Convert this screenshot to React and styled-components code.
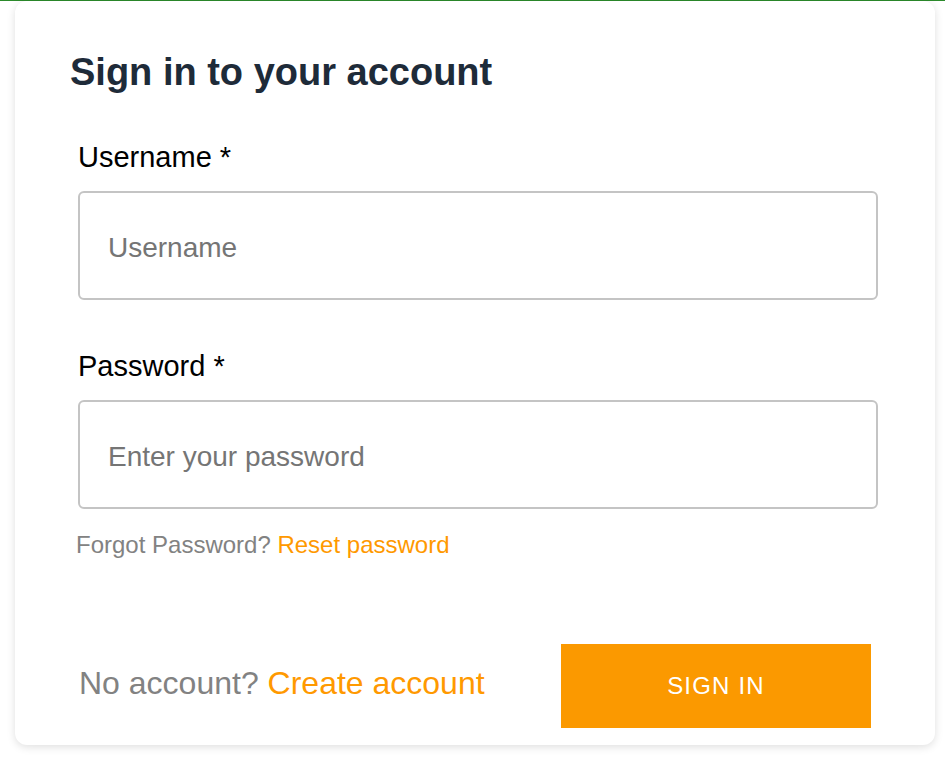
import React from 'react';
import styled, { createGlobalStyle } from 'styled-components';

const GlobalStyles = createGlobalStyle`
	html, body {
		margin: 0;
		padding: 0;
		background: #fff;
		font-family: "Liberation Sans", Arial, sans-serif;
	}
	* { box-sizing: border-box; }
`;

const TopLine = styled.div`
	height: 1px;
	background-color: #2b8a2b;
`;

const Page = styled.div`
	padding: 0 10px 14px 15px;
`;

const Card = styled.div`
	width: 920px;
	height: 744px;
	background: #fff;
	border-radius: 12px;
	box-shadow: 0 2px 8px rgba(0, 0, 0, 0.13);
	padding: 50px 56px 18px 55px;
	display: flex;
	flex-direction: column;
`;

const Title = styled.h1`
	margin: 0;
	font-size: 38px;
	font-weight: 700;
	color: #1e2b39;
	line-height: normal;
`;

const Body = styled.div`
	margin-top: 47px;
	padding-left: 8px;
	display: flex;
	flex-direction: column;
`;

const Label = styled.label`
	font-size: 29px;
	color: #000;
	line-height: normal;
	margin-top: ${({ $first }) => ($first ? '0' : '50px')};
`;

const Input = styled.input`
	display: block;
	width: 800px;
	height: 109px;
	margin: 17px 0 0 0;
	padding: 5px 0 0 28px;
	font-family: inherit;
	font-size: 28px;
	color: #152939;
	background: #fff;
	border: 2px solid #c4c4c4;
	border-radius: 6px;
	outline: none;

	&::placeholder {
		color: #757575;
	}
`;

const Hint = styled.div`
	margin: 22px 0 0 -2px;
	font-size: 24px;
	color: #828282;
	line-height: normal;
`;

const Link = styled.a`
	color: #ff9900;
	text-decoration: none;
	cursor: pointer;
`;

const Footer = styled.div`
	margin-top: 85px;
	padding-left: 1px;
	padding-right: 8px;
	display: flex;
	align-items: center;
	justify-content: space-between;
`;

const FooterText = styled.span`
	font-size: 32px;
	color: #828282;
	line-height: normal;
	padding-bottom: 5px;
`;

const Button = styled.button`
	width: 310px;
	height: 84px;
	border: none;
	background-color: #fb9900;
	color: #fff;
	font-family: inherit;
	font-size: 24px;
	letter-spacing: 1.2px;
	text-transform: uppercase;
	cursor: pointer;
`;

export default function App() {
	return (
		<>
			<GlobalStyles />
			<TopLine />
			<Page>
				<Card>
					<Title>Sign in to your account</Title>
					<Body>
						<Label $first>Username *</Label>
						<Input placeholder="Username" />
						<Label>Password *</Label>
						<Input type="password" placeholder="Enter your password" />
						<Hint>
							Forgot Password? <Link>Reset password</Link>
						</Hint>
						<Footer>
							<FooterText>
								No account? <Link>Create account</Link>
							</FooterText>
							<Button>Sign In</Button>
						</Footer>
					</Body>
				</Card>
			</Page>
		</>
	);
}
